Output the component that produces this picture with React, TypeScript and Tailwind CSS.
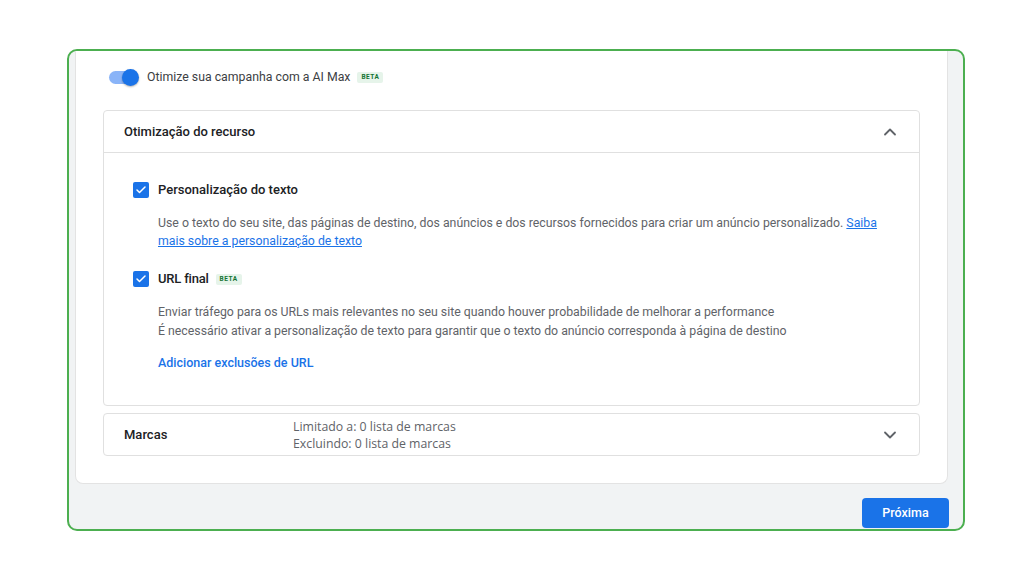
import { ChevronDown, ChevronUp, Check } from "lucide-react";

const Beta = () => (
  <span className="inline-flex items-center h-[11px] px-[4px] rounded-[2px] bg-[#e6f4ea] text-[#137333] text-[6.5px] font-bold tracking-[0.5px] leading-none [font-family:Roboto,sans-serif]">
    BETA
  </span>
);

const Checkbox = () => (
  <div className="w-[16px] h-[16px] rounded-[2px] bg-[#1a73e8] flex items-center justify-center shrink-0">
    <Check className="w-[12px] h-[12px] text-white" strokeWidth={3} />
  </div>
);

export default function App() {
  return (
    <div className="min-h-screen bg-white pt-[49px] pl-[67px] [font-family:Roboto,sans-serif]">
      <div className="w-[898px] h-[482px] border-2 border-[#4caf50] rounded-[10px] bg-[#f1f3f4] flex flex-col overflow-hidden">
        {/* main card, top edge runs off the frame */}
        <div className="ml-[6px] mr-[15px] h-[433px] bg-white rounded-b-[8px] border-x border-b border-[#e3e3e3] px-[27px] pt-[17px]">
          <div className="flex items-center h-[18px] pl-[6px]">
            <div className="relative w-[30px] h-[18px] flex items-center">
              <div className="w-[28px] h-[13px] rounded-full bg-[#8ab4f8]" />
              <div className="absolute right-0 w-[17px] h-[17px] rounded-full bg-[#1a73e8] shadow-[0_1px_2px_rgba(0,0,0,0.3)]" />
            </div>
            <span className="ml-[8px] text-[12.3px] text-[#3c4043]">Otimize sua campanha com a AI Max</span>
            <span className="ml-[7px] flex"><Beta /></span>
          </div>

          {/* Otimização do recurso */}
          <div className="mt-[24px] border border-[#e0e0e0] rounded-[4px] h-[296px]">
            <div className="h-[42px] flex items-center justify-between pl-[20px] pr-[19px] border-b border-[#e0e0e0]">
              <span className="text-[13px] font-medium text-[#202124]">Otimização do recurso</span>
              <ChevronUp className="w-[20px] h-[20px] text-[#5f6368]" strokeWidth={2.2} />
            </div>
            <div className="pl-[29px] pr-[34px] pt-[27px]">
              <div className="flex items-center h-[20px] gap-[9px]">
                <Checkbox />
                <span className="text-[13px] font-medium text-[#202124]">Personalização do texto</span>
              </div>
              <div className="ml-[25px] mt-[14px] text-[12.3px] leading-[18px] text-[#5f6368]">
                <p className="whitespace-nowrap">
                  Use o texto do seu site, das páginas de destino, dos anúncios e dos recursos fornecidos para criar um anúncio personalizado.{" "}
                  <span className="text-[#1a73e8] underline">Saiba</span>
                </p>
                <p>
                  <span className="text-[#1a73e8] underline">mais sobre a personalização de texto</span>
                </p>
              </div>

              <div className="flex items-center h-[20px] gap-[9px] mt-[19px]">
                <Checkbox />
                <span className="text-[13px] font-medium text-[#202124] tracking-[-0.2px]">URL final</span>
                <span className="ml-[-2px] flex"><Beta /></span>
              </div>
              <div className="ml-[25px] mt-[14px] text-[12.3px] leading-[19px] text-[#5f6368]">
                <p>Enviar tráfego para os URLs mais relevantes no seu site quando houver probabilidade de melhorar a performance</p>
                <p>É necessário ativar a personalização de texto para garantir que o texto do anúncio corresponda à página de destino</p>
              </div>
              <p className="ml-[25px] mt-[13px] text-[12.5px] leading-[18px] font-medium text-[#1a73e8]">
                Adicionar exclusões de URL
              </p>
            </div>
          </div>

          {/* Marcas */}
          <div className="mt-[7px] border border-[#e0e0e0] rounded-[4px] h-[43px] flex items-center pl-[20px] pr-[19px]">
            <span className="w-[169px] text-[13px] font-medium text-[#202124]">Marcas</span>
            <div className="flex-1 text-[12.3px] leading-[17px] text-[#5f6368] [font-family:'Open_Sans',sans-serif]">
              <p>Limitado a: 0 lista de marcas</p>
              <p>Excluindo: 0 lista de marcas</p>
            </div>
            <ChevronDown className="w-[20px] h-[20px] text-[#5f6368]" strokeWidth={2.2} />
          </div>
        </div>

        <div className="flex justify-end mr-[14px] mt-[14px]">
          <button className="w-[87px] h-[30px] rounded-[4px] bg-[#1a73e8] text-white text-[12.5px] font-medium">
            Próxima
          </button>
        </div>
      </div>
    </div>
  );
}
